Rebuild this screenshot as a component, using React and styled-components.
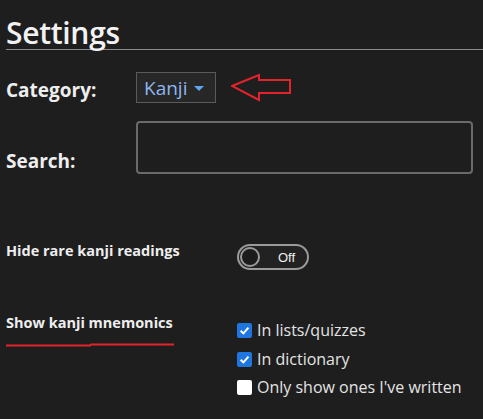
import React from "react"
import styled, { createGlobalStyle } from "styled-components"

const Global = createGlobalStyle`
  html, body {
    margin: 0;
    padding: 0;
    background: #1e1e1e;
  }
  body {
    font-family: "Open Sans", "Liberation Sans", sans-serif;
    color: #ececec;
  }
`

const Page = styled.div`
  width: 483px;
  height: 419px;
  overflow: hidden;
  padding-left: 6px;
  box-sizing: border-box;
`

const Heading = styled.h1`
  margin: 0;
  padding-top: 14px;
  height: 35px;
  border-bottom: 1px solid #8a8a8a;
  font-size: 30px;
  font-weight: 600;
  line-height: 37px;
  color: #f2f2f2;
  letter-spacing: -0.3px;
`

const Row = styled.div`
  display: flex;
  align-items: ${p => p.$align || "center"};
  margin-top: ${p => p.$top}px;
`

const Label = styled.div`
  width: ${p => p.$w}px;
  flex: none;
  font-size: ${p => p.$size}px;
  font-weight: 700;
  color: #eeeeee;
  margin-top: ${p => p.$mt || 0}px;
  position: relative;
`

const Select = styled.div`
  display: flex;
  align-items: center;
  gap: 7px;
  height: 31px;
  padding: 0 11px 0 7px;
  box-sizing: border-box;
  background: #272727;
  border: 1px solid #5a5a5a;
  color: #8fb6f2;
  font-size: 19px;
`

const Caret = styled.span`
  width: 0;
  height: 0;
  border-left: 5px solid transparent;
  border-right: 5px solid transparent;
  border-top: 5px solid #5fa6f2;
  margin-top: 2px;
`

const Arrow = styled.svg`
  margin-left: 15px;
  flex: none;
`

const Input = styled.div`
  width: 337px;
  height: 53px;
  box-sizing: border-box;
  border: 2px solid #6a6a6a;
  border-radius: 4px;
  background: #1e1e1e;
`

const Toggle = styled.div`
  width: 72px;
  height: 26px;
  box-sizing: border-box;
  border: 2px solid #9a9a9a;
  border-radius: 13px;
  display: flex;
  align-items: center;
  padding-left: 1px;
  background: #222;
`

const Knob = styled.span`
  width: 20px;
  height: 20px;
  border-radius: 50%;
  border: 2px solid #9a9a9a;
  box-sizing: border-box;
  background: #1c1c1c;
`

const ToggleText = styled.span`
  font-family: "Liberation Sans", "DejaVu Sans", sans-serif;
  font-size: 13px;
  color: #f0f0f0;
  margin-left: 18px;
`

const Underline = styled.svg`
  position: absolute;
  left: 0;
  top: 29px;
`

const Checks = styled.div`
  display: flex;
  flex-direction: column;
  gap: 7px;
  padding-top: 7px;
`

const CheckRow = styled.label`
  display: flex;
  align-items: center;
  gap: 5px;
  font-size: 16px;
  line-height: 21.5px;
  color: #e4e4e4;
`

const Box = styled.span`
  width: 15px;
  height: 15px;
  border-radius: 2px;
  background: ${p => (p.$checked ? "#1f76e0" : "#ffffff")};
  display: flex;
  align-items: center;
  justify-content: center;
  flex: none;
`

const Check = ({ checked, children }) => (
  <CheckRow>
    <Box $checked={checked}>
      {checked && (
        <svg width="11" height="11" viewBox="0 0 10 10">
          <path d="M1.5 5.2 L4 7.6 L8.6 2.4" fill="none" stroke="#fff" strokeWidth="1.8" />
        </svg>
      )}
    </Box>
    {children}
  </CheckRow>
)

export default function App() {
  return (
    <Page>
      <Global />
      <Heading>Settings</Heading>
      <Row $top={22}>
        <Label $w={130} $size={19} $mt={5}>Category:</Label>
        <Select>
          Kanji
          <Caret />
        </Select>
        <Arrow width="62" height="30" viewBox="0 0 62 30">
          <path
            d="M1 13 L28 2 L28 7 L59 7 L59 20 L28 20 L28 27 Z"
            fill="none"
            stroke="#e3232c"
            strokeWidth="2"
            strokeLinejoin="miter"
          />
        </Arrow>
      </Row>
      <Row $top={18} $align="flex-end">
        <Label $w={130} $size={19}>Search:</Label>
        <Input />
      </Row>
      <Row $top={70} $align="flex-start">
        <Label $w={231} $size={14.5} $mt={-3}>Hide rare kanji readings</Label>
        <Toggle>
          <Knob />
          <ToggleText>Off</ToggleText>
        </Toggle>
      </Row>
      <Row $top={43} $align="flex-start">
        <Label $w={231} $size={14.5}>
          Show kanji mnemonics
          <Underline width="170" height="5" viewBox="0 0 170 5">
            <path d="M0 3.4 L84 3.6 L85 2.6 L168 2.6" fill="none" stroke="#e3232c" strokeWidth="2" />
          </Underline>
        </Label>
        <Checks>
          <Check checked>In lists/quizzes</Check>
          <Check checked>In dictionary</Check>
          <Check>Only show ones I've written</Check>
        </Checks>
      </Row>
    </Page>
  )
}
